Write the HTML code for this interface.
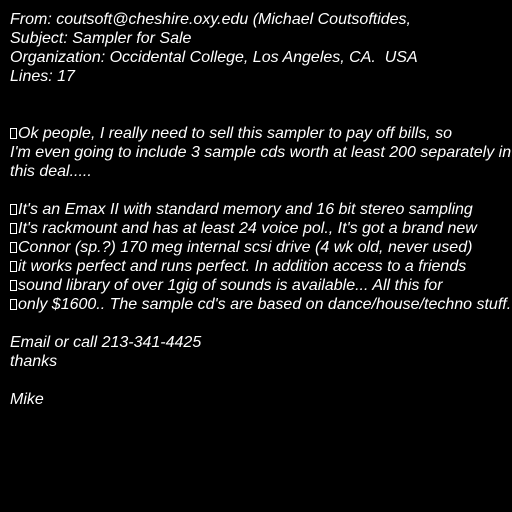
<!DOCTYPE html>
<html><head><style>
html,body{margin:0;padding:0;background:#000;width:512px;height:512px;overflow:hidden}
.l{position:absolute;left:10px;color:#fff;font:italic 16px "Liberation Sans",sans-serif;white-space:pre;line-height:19px}
.b{display:inline-block;width:7px;height:11px;border:1px solid #fff;box-sizing:border-box;margin-right:1px;vertical-align:-1px}
</style></head><body>
<div class="l" style="top:10px">From: coutsoft@cheshire.oxy.edu (Michael Coutsoftides,</div>
<div class="l" style="top:29px">Subject: Sampler for Sale</div>
<div class="l" style="top:48px">Organization: Occidental College, Los Angeles, CA.  USA</div>
<div class="l" style="top:67px">Lines: 17</div>
<div class="l" style="top:124px"><span class="b"></span>Ok people, I really need to sell this sampler to pay off bills, so</div>
<div class="l" style="top:143px">I'm even going to include 3 sample cds worth at least 200 separately in</div>
<div class="l" style="top:162px">this deal.....</div>
<div class="l" style="top:200px"><span class="b"></span>It's an Emax II with standard memory and 16 bit stereo sampling</div>
<div class="l" style="top:219px"><span class="b"></span>It's rackmount and has at least 24 voice pol., It's got a brand new</div>
<div class="l" style="top:238px"><span class="b"></span>Connor (sp.?) 170 meg internal scsi drive (4 wk old, never used)</div>
<div class="l" style="top:257px"><span class="b"></span>it works perfect and runs perfect. In addition access to a friends</div>
<div class="l" style="top:276px"><span class="b"></span>sound library of over 1gig of sounds is available... All this for</div>
<div class="l" style="top:295px"><span class="b"></span>only $1600.. The sample cd's are based on dance/house/techno stuff.</div>
<div class="l" style="top:333px">Email or call 213-341-4425</div>
<div class="l" style="top:352px">thanks</div>
<div class="l" style="top:390px">Mike</div>
</body></html>
